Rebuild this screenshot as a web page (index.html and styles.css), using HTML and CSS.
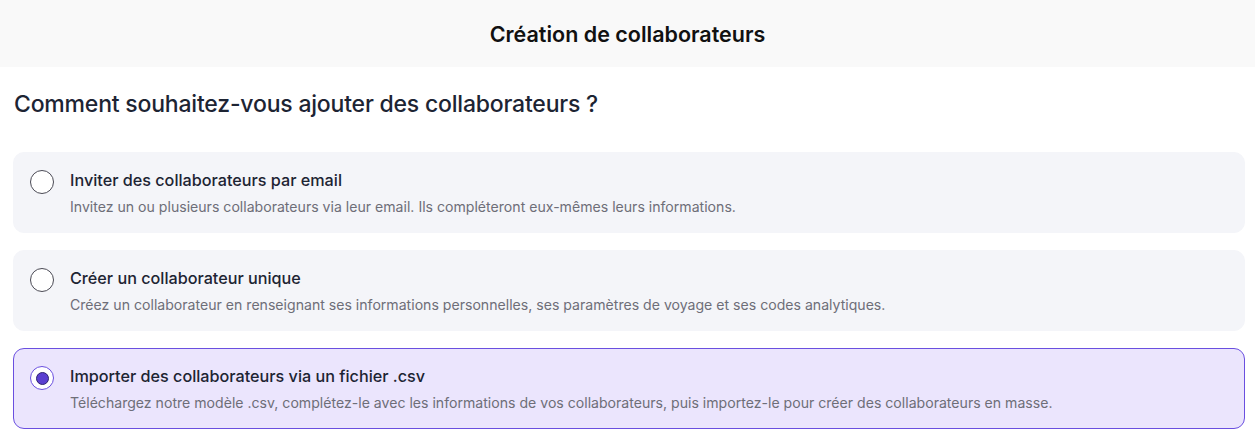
FILE: index.html
```html
<!doctype html>
<html lang="fr">
<head>
  <meta charset="utf-8" />
  <meta name="viewport" content="width=device-width,initial-scale=1" />
  <title>Création de collaborateurs</title>
  <link rel="stylesheet" href="styles.css">
</head>
<body>
  <header class="topbar">
    <h1>Création de collaborateurs</h1>
  </header>

  <main class="content">
    <h2 class="question">Comment souhaitez-vous ajouter des collaborateurs ?</h2>

    <div class="options" role="radiogroup">
      <label class="option">
        <input type="radio" name="mode" value="email" />
        <span class="radio"></span>
        <span class="text">
          <span class="title">Inviter des collaborateurs par email</span>
          <span class="desc">Invitez un ou plusieurs collaborateurs via leur email. Ils compléteront eux-mêmes leurs informations.</span>
        </span>
      </label>

      <label class="option">
        <input type="radio" name="mode" value="single" />
        <span class="radio"></span>
        <span class="text">
          <span class="title">Créer un collaborateur unique</span>
          <span class="desc">Créez un collaborateur en renseignant ses informations personnelles, ses paramètres de voyage et ses codes analytiques.</span>
        </span>
      </label>

      <label class="option">
        <input type="radio" name="mode" value="csv" checked />
        <span class="radio"></span>
        <span class="text">
          <span class="title">Importer des collaborateurs via un fichier .csv</span>
          <span class="desc">Téléchargez notre modèle .csv, complétez-le avec les informations de vos collaborateurs, puis importez-le pour créer des collaborateurs en masse.</span>
        </span>
      </label>
    </div>
  </main>
</body>
</html>
```

FILE: styles.css
```css
:root{
  --ink:#1d2433;
  --muted:#6e6e78;
  --card:#f4f5f9;
  --accent:#6a4fe0;
  --accent-dark:#5a3fd0;
  --accent-bg:#ebe5fd;
}
*{box-sizing:border-box}
body{
  margin:0;
  font-family:Inter,"Noto Sans",Arial,sans-serif;
  color:var(--ink);
  background:#fff;
  -webkit-font-smoothing:antialiased;
}

.topbar{
  height:67px;
  background:#f9f9f9;
  display:flex;
  align-items:center;
  justify-content:center;
}
.topbar h1{
  margin:0;
  font-size:21.5px;
  font-weight:600;
  color:#111;
}

.content{padding:22px 10px 0 13px}

.question{
  margin:0 0 33px 1px;
  font-size:23px;
  font-weight:500;
  line-height:30px;
  letter-spacing:-0.2px;
}

.options{
  display:flex;
  flex-direction:column;
  gap:17px;
}

.option{
  display:flex;
  align-items:flex-start;
  gap:16px;
  height:81px;
  padding:16px 16px 0 16px;
  background:var(--card);
  border:1px solid var(--card);
  border-radius:11px;
  cursor:pointer;
}
.option input{display:none}

.radio{
  width:24px;
  height:24px;
  margin-top:1px;
  border-radius:50%;
  border:1px solid #4a4a55;
  background:#fff;
  flex-shrink:0;
  display:flex;
  align-items:center;
  justify-content:center;
}

.option:has(input:checked){
  background:var(--accent-bg);
  border-color:var(--accent);
}
.option:has(input:checked) .radio{
  border-color:var(--accent);
  background:#fff;
}
.option:has(input:checked) .radio::after{
  content:"";
  width:11px;
  height:11px;
  border-radius:50%;
  background:var(--accent-dark);
  border:1px solid #2e2370;
}

.text{
  display:flex;
  flex-direction:column;
  gap:7px;
}
.title{
  font-size:16.2px;
  font-weight:500;
  line-height:22px;
}
.desc{
  font-size:14.1px;
  line-height:18px;
  color:var(--muted);
}
```
